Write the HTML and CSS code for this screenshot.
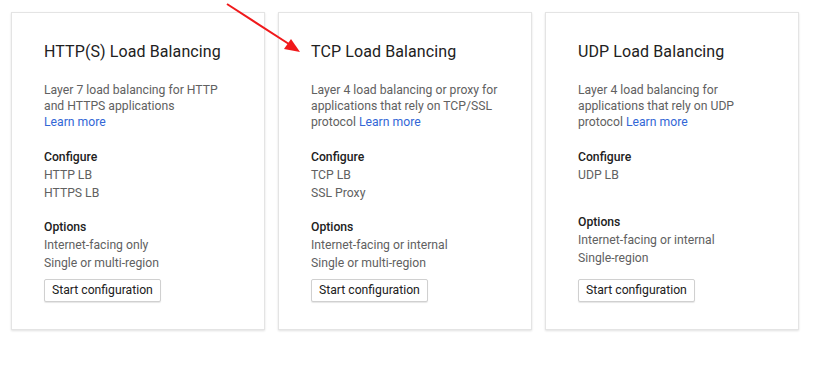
FILE: index.html
```html
<!DOCTYPE html>
<html>
<head>
<meta charset="utf-8">
<link rel="stylesheet" href="styles.css">
</head>
<body>
<div class="page">
  <div class="cards">
    <div class="card">
      <h2 class="title">HTTP(S) Load Balancing</h2>
      <p class="desc">Layer 7 load balancing for HTTP and HTTPS applications <a class="link" href="#">Learn more</a></p>
      <div class="section">
        <div class="label">Configure</div>
        <div class="item">HTTP LB</div>
        <div class="item">HTTPS LB</div>
      </div>
      <div class="section">
        <div class="label">Options</div>
        <div class="item">Internet-facing only</div>
        <div class="item">Single or multi-region</div>
      </div>
      <button class="btn">Start configuration</button>
    </div>
    <div class="card">
      <h2 class="title">TCP Load Balancing</h2>
      <p class="desc">Layer 4 load balancing or proxy for applications that rely on TCP/SSL protocol <a class="link" href="#">Learn more</a></p>
      <div class="section">
        <div class="label">Configure</div>
        <div class="item">TCP LB</div>
        <div class="item">SSL Proxy</div>
      </div>
      <div class="section">
        <div class="label">Options</div>
        <div class="item">Internet-facing or internal</div>
        <div class="item">Single or multi-region</div>
      </div>
      <button class="btn">Start configuration</button>
    </div>
    <div class="card">
      <h2 class="title">UDP Load Balancing</h2>
      <p class="desc">Layer 4 load balancing for applications that rely on UDP protocol <a class="link" href="#">Learn more</a></p>
      <div class="section section-short">
        <div class="label">Configure</div>
        <div class="item">UDP LB</div>
      </div>
      <div class="section">
        <div class="label">Options</div>
        <div class="item">Internet-facing or internal</div>
        <div class="item">Single-region</div>
      </div>
      <button class="btn">Start configuration</button>
    </div>
  </div>
  <svg class="arrow" width="90" height="60" viewBox="0 0 90 60">
    <line x1="7" y1="4" x2="72" y2="46" stroke="#f0191b" stroke-width="2"/>
    <polygon points="80,52 64,49 71,39" fill="#f0191b"/>
  </svg>
</div>
</body>
</html>
```
FILE: styles.css
```css
html, body {
  margin: 0;
  padding: 0;
  background: #ffffff;
}
body {
  font-family: Roboto, "Liberation Sans", Arial, sans-serif;
  width: 818px;
  height: 369px;
  overflow: hidden;
}
.page {
  position: relative;
  padding: 12px 0 0 11px;
}
.cards {
  display: flex;
  gap: 13px;
}
.card {
  box-sizing: border-box;
  width: 254px;
  height: 318px;
  border: 1px solid #e4e4e4;
  box-shadow: 0 1px 2px rgba(0, 0, 0, 0.12);
  background: #fff;
  padding: 27px 30px 27px 32px;
  display: flex;
  flex-direction: column;
  align-items: flex-start;
}
.title {
  margin: 0;
  font-size: 16px;
  font-weight: 400;
  color: #212121;
  line-height: 24px;
  letter-spacing: 0.1px;
}
.desc {
  margin: 18px 0 0 0;
  font-size: 12.2px;
  line-height: 16px;
  color: #616161;
}
.link {
  color: #3367d6;
  text-decoration: none;
  white-space: nowrap;
}
.section {
  margin-top: 17px;
  font-size: 12.2px;
}
.desc + .section {
  margin-top: 19px;
}
.section-short {
  padding-bottom: 13px;
}
.label {
  font-weight: 500;
  color: #212121;
  line-height: 17px;
}
.item {
  color: #616161;
  line-height: 18px;
}
.btn {
  margin-top: auto;
  font-family: Roboto, "Liberation Sans", Arial, sans-serif;
  font-size: 12.2px;
  color: #212121;
  background: #fff;
  border: 1px solid #d0d0d0;
  border-radius: 2px;
  box-shadow: 0 1px 1px rgba(0, 0, 0, 0.1);
  height: 23px;
  padding: 0 7px;
  line-height: 21px;
}
.arrow {
  position: absolute;
  left: 220px;
  top: 0;
}
```
